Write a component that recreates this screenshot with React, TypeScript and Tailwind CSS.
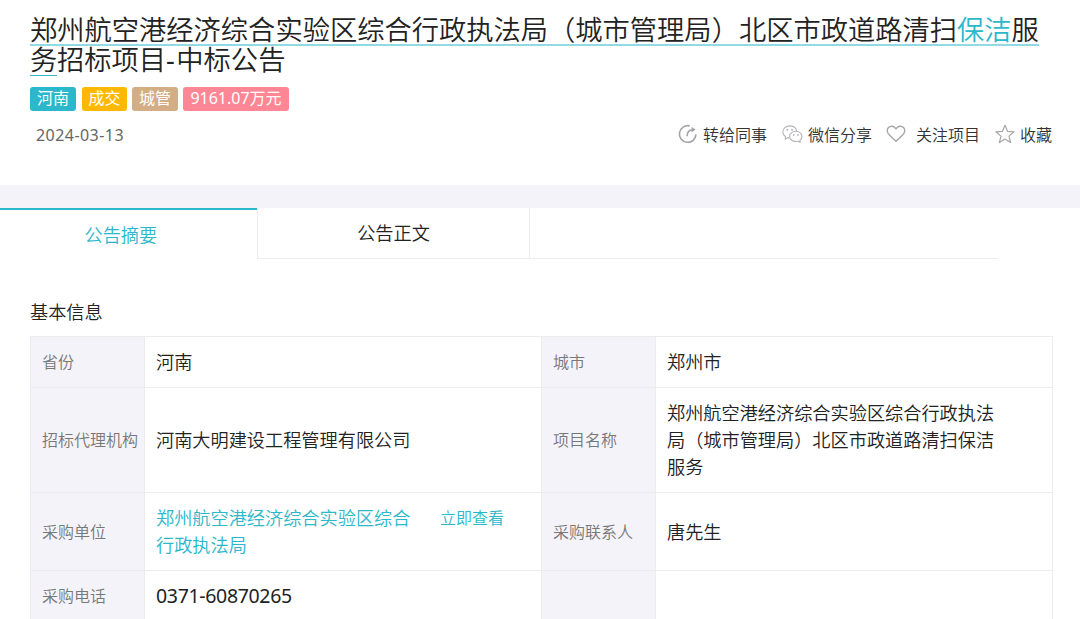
import React from "react";

const label = "flex items-center border-r border-b border-[#ececef] bg-[#f4f3f9] pl-[11px] text-[16px] whitespace-nowrap text-[#777]";
const value = "flex items-center border-r border-b border-[#ececec] pt-[1.5px] pl-[11px] text-[18.18px] leading-[27.4px] text-[#222]";

function ShareIcon() {
  return (
    <svg width="20" height="20" viewBox="0 0 20 20" fill="none" stroke="#a3a3a9" strokeWidth="1.6">
      <path d="M11.6 1.9A8.3 8.3 0 1 0 18 10.4" />
      <path d="M9.2 12.2C9 8 11 5.900 15 5.700" />
      <path d="M13.600 2.900 17.600 5.600 13.600 8.400Z" fill="#a3a3a9" stroke="none" />
    </svg>
  );
}

function WechatIcon() {
  return (
    <svg width="21" height="20" viewBox="0 0 21 20" fill="none" stroke="#b4b4b9" strokeWidth="1.1" strokeLinejoin="round">
      <path d="M7.2 13.9 5.8 13.6 3.2 15.2 3.6 12.7C1.8 11.5.8 9.900.8 8 .8 4.500 4 1.900 7.700 1.900c3.600 0 6.500 2.200 7 5.300" />
      <path d="M13.800 7.300c3.400 0 6.200 2.300 6.200 5.200 0 1.600-.8 2.900-2.100 3.900l.3 1.900-2.100-1.100c-.7.2-1.500.3-2.300.3-3.400 0-6.200-2.300-6.200-5.100s2.800-5.100 6.200-5.100Z" />
      <g fill="#b4b4b9" stroke="none">
        <circle cx="5.400" cy="5.800" r="1" />
        <circle cx="10" cy="5.800" r="1" />
        <circle cx="11.700" cy="10.900" r=".9" />
        <circle cx="16" cy="10.900" r=".9" />
      </g>
    </svg>
  );
}

function HeartIcon() {
  return (
    <svg width="20" height="20" viewBox="0 0 20 20" fill="none" stroke="#a6a6aa" strokeWidth="1.400" strokeLinejoin="round">
      <path d="M10 17.200 3.100 10.700C.8 8.500.7 5.300 2.500 3.500c2.200-2.200 5.800-1.500 7.500 1.300 1.700-2.800 5.300-3.500 7.500-1.300 1.800 1.800 1.700 5-.6 7.200Z" />
    </svg>
  );
}

function StarIcon() {
  return (
    <svg width="20" height="20" viewBox="0 0 20 20" fill="none" stroke="#a6a6aa" strokeWidth="1.200" strokeLinejoin="round">
      <path d="m10 1.200 2.500 6.100 6.600.5-5.100 4.300 1.600 6.400L10 15l-5.600 3.500L6 12.100.9 7.800l6.600-.5Z" />
    </svg>
  );
}

export default function App() {
  return (
    <div className="h-[619px] w-[1080px] overflow-hidden bg-white font-['Noto_Sans','Noto_Sans_CJK_SC',sans-serif] font-[350]">
      <header className="h-[185px] pt-[15px] pl-[30px]">
        <h1 className="text-[27.27px] leading-[30px] font-[350] whitespace-nowrap text-[#222]">
          <span className="block h-[31px] w-[1009px] border-b-2 border-[#91dae4]">
            郑州航空港经济综合实验区综合行政执法局（城市管理局）北区市政道路清扫<span className="text-[#2cb7ca]">保洁</span>服
          </span>
          <span className="flex h-[30px]">
            <span className="h-[30px] w-[27px] border-b border-[#2cb7ca] leading-[28px]">务</span>
            <span className="leading-[28px]">招标项目<span className="font-normal tracking-[1.500px]">-</span>中标公告</span>
          </span>
        </h1>
        <div className="mt-[11px] flex text-[16px] leading-[23px] font-normal whitespace-nowrap text-white">
          <span className="h-6 w-[46px] rounded-[3px] bg-[#2cb7ca] text-center">河南</span>
          <span className="ml-1.5 h-6 w-[45px] rounded-[3px] bg-[#ffb800] text-center">成交</span>
          <span className="ml-[5px] h-6 w-[46px] rounded-[3px] bg-[#d2ad86] text-center">城管</span>
          <span className="ml-[5px] h-6 w-[106px] rounded-[3px] bg-[#ff8795] text-center">9161.07万元</span>
        </div>
        <div className="mt-[11px] flex h-6 items-center whitespace-nowrap text-[#333]">
          <span className="ml-1.5 w-[642px] pt-0.5 text-[16px] font-normal tracking-[0.450px] text-[#666]">2024-03-13</span>
          <ShareIcon />
          <span className="ml-[5px] w-[79px] pt-0.5 text-[16px]">转给同事</span>
          <WechatIcon />
          <span className="ml-[5px] w-[78px] pt-0.5 text-[16px]">微信分享</span>
          <HeartIcon />
          <span className="ml-[10px] w-[79px] pt-0.5 text-[16px]">关注项目</span>
          <StarIcon />
          <span className="ml-[5px] pt-0.5 text-[16px]">收藏</span>
        </div>
      </header>

      <div className="h-[23px] bg-[#f4f3f9]" />

      <nav className="flex h-[51px] w-[998px] text-[18.18px] whitespace-nowrap">
        <div className="w-[257px] border-t-2 border-[#2cb7ca] pl-[84.500px] leading-[50px] text-[#2cb7ca]">公告摘要</div>
        <div className="w-[273px] border-r border-b border-l border-[#ececec] text-center leading-[51px] text-[#222]">公告正文</div>
        <div className="flex-1 border-b border-[#ececec]" />
      </nav>

      <main className="pl-[30px]">
        <h2 className="h-[77px] pt-10 text-[18.18px] leading-[27px] font-[350] text-[#222]">基本信息</h2>
        <section className="grid w-[1023px] grid-cols-[115px_397px_114px_397px] grid-rows-[51px_105px_78px_51px] border-t border-[#ececec]">
          <div className={label + " border-l"}>省份</div>
          <div className={value}>河南</div>
          <div className={label}>城市</div>
          <div className={value}>郑州市</div>

          <div className={label + " border-l"}>招标代理机构</div>
          <div className={value}>河南大明建设工程管理有限公司</div>
          <div className={label}>项目名称</div>
          <div className={value}>
            <p>郑州航空港经济综合实验区综合行政执法<br />局（城市管理局）北区市政道路清扫保洁<br />服务</p>
          </div>

          <div className={label + " border-l"}>采购单位</div>
          <div className={value}>
            <p className="w-[284px] leading-[27px] text-[#2cb7ca]">郑州航空港经济综合实验区综合<br />行政执法局</p>
            <a className="h-[54px] text-[16px] text-[#2cb7ca]">立即查看</a>
          </div>
          <div className={label}>采购联系人</div>
          <div className={value}>唐先生</div>

          <div className={label + " border-l"}>采购电话</div>
          <div className={value}><span className="pb-0.5 text-[19.500px] font-normal tracking-[-0.330px]">0371-60870265</span></div>
          <div className={label} />
          <div className={value} />
        </section>
      </main>
    </div>
  );
}
